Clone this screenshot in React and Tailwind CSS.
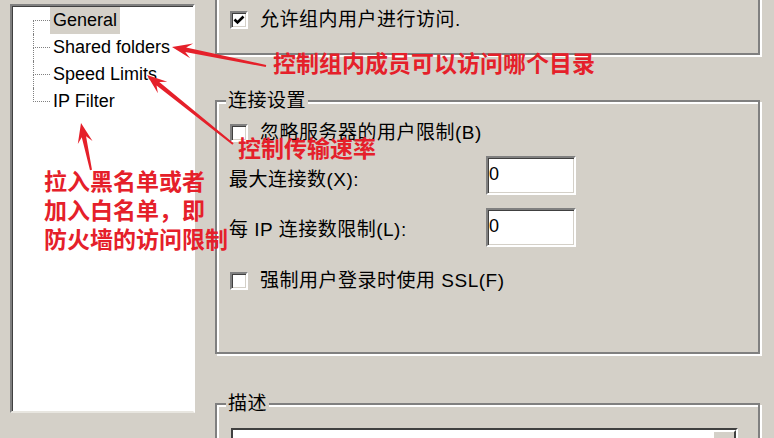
import React from 'react';

const treeItems = ['General', 'Shared folders', 'Speed Limits', 'IP Filter'];

// red annotation arrows: [tailX, tailY, tipX, tipY]
const arrows = [
  [266, 66, 172, 47],
  [233, 144, 147, 75],
  [91, 170, 81, 123],
];

function arrowPoints([x1, y1, x2, y2]) {
  const dx = x2 - x1;
  const dy = y2 - y1;
  const len = Math.hypot(dx, dy);
  const ux = dx / len;
  const uy = dy / len;
  const nx = -uy;
  const ny = ux;
  const head = 20;
  const p = (ax, ay, along, side) => [ax + ux * along + nx * side, ay + uy * along + ny * side];
  const pts = [
    p(x1, y1, 0, 1),
    p(x2, y2, -head * 0.7, 2.2),
    p(x2, y2, -head, 7.5),
    [x2, y2],
    p(x2, y2, -head, -7.5),
    p(x2, y2, -head * 0.7, -2.2),
    p(x1, y1, 0, -1),
  ];
  return pts.map((q) => q.join(',')).join(' ');
}

function Check({ checked }) {
  return (
    <span className="w-[18px] h-[18px] shrink-0 bg-white border-2 border-t-[#808080] border-l-[#808080] border-r-white border-b-white shadow-[inset_1px_1px_0_#404040,inset_-1px_-1px_0_#d4d0c8] flex items-center justify-center">
      {checked && (
        <svg width="12" height="12" viewBox="0 0 12 12">
          <path d="M1.5 5.5 L4.5 8.5 L10.5 2.5" fill="none" stroke="#000" strokeWidth="2.6" />
        </svg>
      )}
    </span>
  );
}

function CheckRow({ checked, children, className = '' }) {
  return (
    <div className={`flex items-center gap-[12px] h-[24px] shrink-0 ${className}`}>
      <Check checked={checked} />
      <span className="text-[19px] leading-[24px] tracking-[0.5px] whitespace-nowrap">{children}</span>
    </div>
  );
}

function Field({ value }) {
  return (
    <div className="w-[90px] h-[39px] shrink-0 bg-white border-2 border-t-[#808080] border-l-[#808080] border-r-white border-b-white shadow-[inset_1px_1px_0_#404040,inset_-1px_-1px_0_#d4d0c8] pl-[1px] pt-[4px] text-[18px] leading-[24px]">
      {value}
    </div>
  );
}

const groupCls = 'flex flex-col shrink-0 border-2 border-[#808080] shadow-[inset_2px_2px_0_#fff,2px_2px_0_#fff]';

function GroupLabel({ children }) {
  return (
    <div className="-mt-[13px] ml-[9px] px-[2px] w-fit shrink-0 bg-[#d4d0c8] text-[19px] leading-[24px] tracking-[0.5px]">
      {children}
    </div>
  );
}

export default function App() {
  return (
    <div className="relative w-[774px] h-[438px] overflow-hidden bg-[#d4d0c8] text-black flex font-['Liberation_Sans','Noto_Sans_CJK_SC',sans-serif]">
      {/* tree */}
      <div className="ml-[10px] mt-[4px] w-[185px] h-[409px] shrink-0 bg-white border-2 border-t-[#808080] border-l-[#808080] border-r-white border-b-[#e8e6e0] shadow-[inset_1px_1px_0_#404040]">
        <div className="ml-[21px] pt-[1px] flex flex-col">
          {treeItems.map((item, i) => (
            <div key={item} className="flex h-[27px]">
              <div className="w-[17px] flex flex-col">
                <div className={`h-1/2 border-b border-dotted border-b-[#808080] ${i > 0 ? 'border-l border-dotted border-l-[#808080]' : ''}`} />
                <div className={`h-1/2 ${i < treeItems.length - 1 ? 'border-l border-dotted border-l-[#808080]' : ''}`} />
              </div>
              <span className={`px-[3px] text-[18px] leading-[27px] whitespace-nowrap ${i === 0 ? 'bg-[#d4d0c8]' : ''}`}>
                {item}
              </span>
            </div>
          ))}
        </div>
      </div>

      {/* right side */}
      <div className="ml-[20px] w-[545px] flex flex-col">
        <div className={`${groupCls} -mt-[22px] h-[77px] pt-[28px] pl-[13px]`}>
          <CheckRow checked>允许组内用户进行访问.</CheckRow>
        </div>

        <div className={`${groupCls} mt-[45px] h-[254px]`}>
          <GroupLabel>连接设置</GroupLabel>
          <CheckRow className="mt-[8px] ml-[13px]">忽略服务器的用户限制(B)</CheckRow>
          <div className="mt-[11px] ml-[12px] flex items-start shrink-0">
            <span className="w-[257px] mt-[12px] text-[19px] leading-[24px] tracking-[0.5px]">最大连接数(X):</span>
            <Field value="0" />
          </div>
          <div className="mt-[13px] ml-[12px] flex items-start shrink-0">
            <span className="w-[257px] mt-[10px] text-[19px] leading-[24px] tracking-[0.5px]">每 IP 连接数限制(L):</span>
            <Field value="0" />
          </div>
          <CheckRow className="mt-[22px] ml-[13px]">强制用户登录时使用 SSL(F)</CheckRow>
        </div>

        <div className={`${groupCls} mt-[49px] h-[100px]`}>
          <GroupLabel>描述</GroupLabel>
          <div className="mt-[12px] ml-[14px] mr-[20px] h-[60px] shrink-0 bg-white border-2 border-t-[#404040] border-l-[#404040] border-r-white border-b-white flex justify-end">
            <div className="w-[24px] h-[24px] bg-[#d4d0c8] border-2 border-t-white border-l-white border-r-[#404040] border-b-[#404040]" />
          </div>
        </div>
      </div>

      {/* red annotations */}
      <div className="absolute left-[273px] top-[50px] text-[23px] leading-[28px] font-bold text-[#e5202a] whitespace-nowrap">
        控制组内成员可以访问哪个目录
      </div>
      <div className="absolute left-[238px] top-[135px] text-[23px] leading-[28px] font-bold text-[#e5202a] whitespace-nowrap">
        控制传输速率
      </div>
      <div className="absolute left-[44px] top-[168px] text-[23px] leading-[29px] font-bold text-[#e5202a] whitespace-nowrap">
        <div>拉入黑名单或者</div>
        <div>加入白名单，即</div>
        <div>防火墙的访问限制</div>
      </div>
      <svg className="absolute inset-0 pointer-events-none" width="774" height="438">
        {arrows.map((a, i) => (
          <polygon key={i} points={arrowPoints(a)} fill="#e5202a" />
        ))}
      </svg>
    </div>
  );
}
